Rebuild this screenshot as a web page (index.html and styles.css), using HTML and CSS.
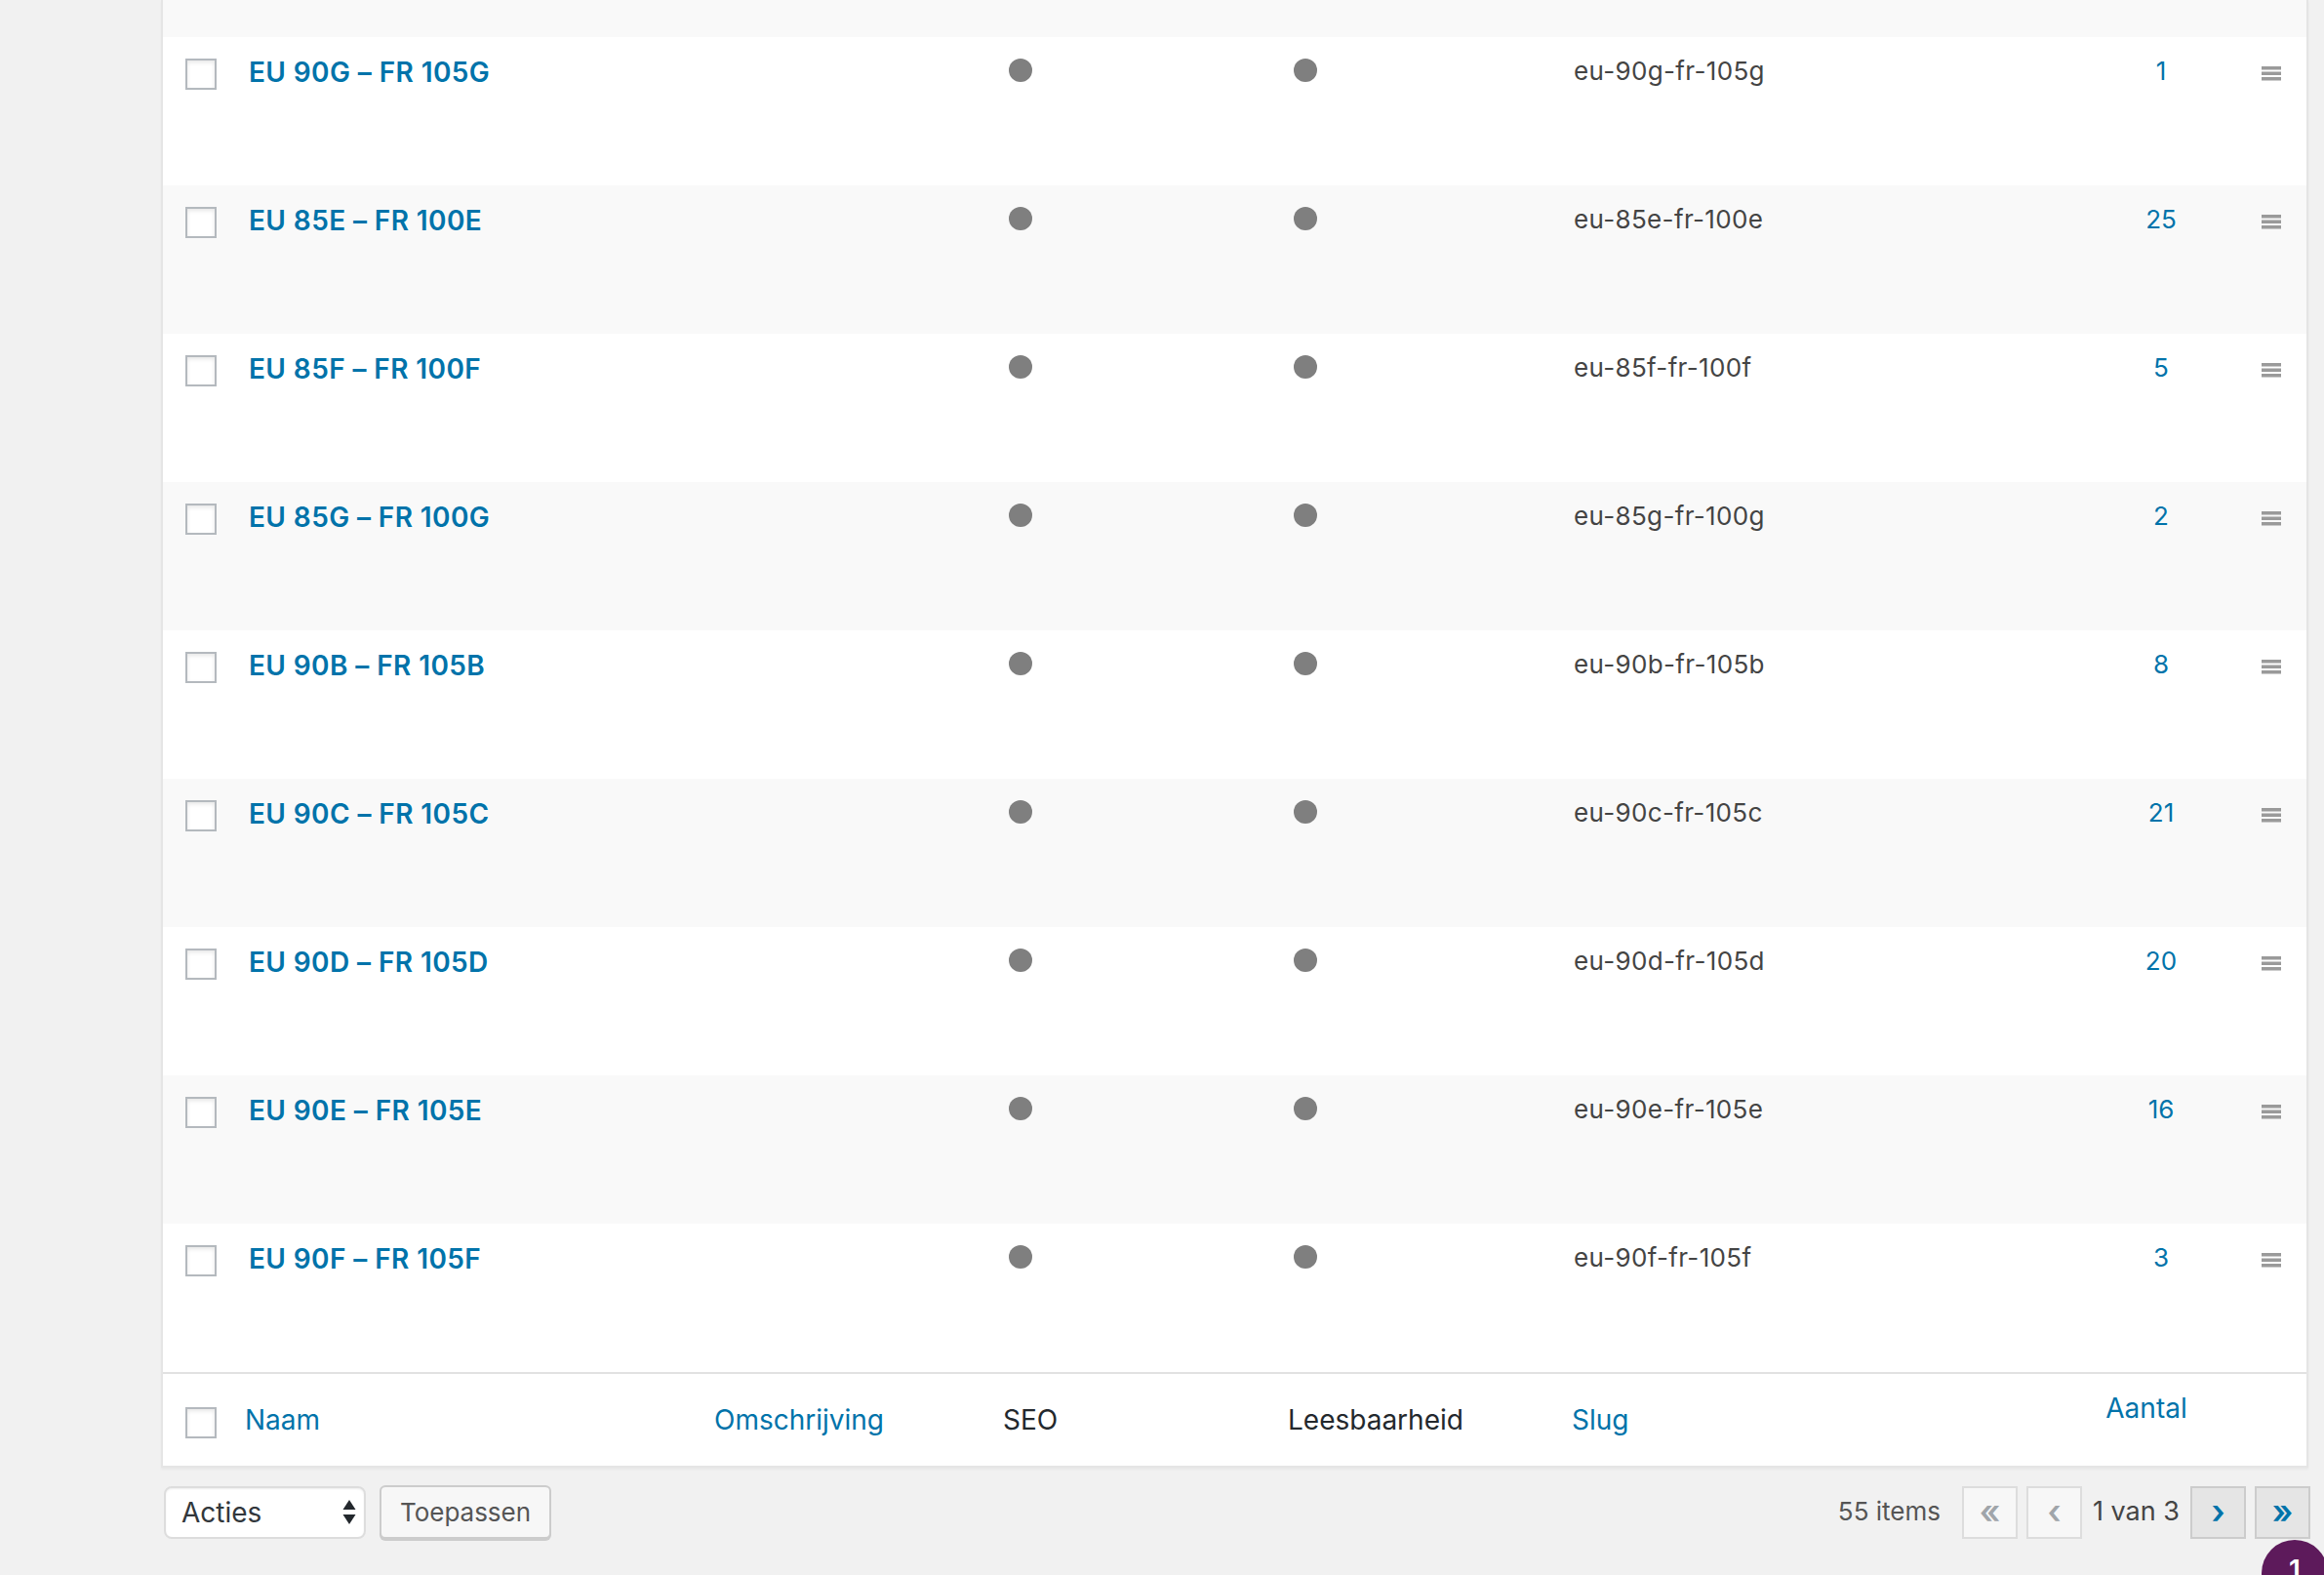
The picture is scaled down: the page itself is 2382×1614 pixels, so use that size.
FILE: index.html
```html
<!DOCTYPE html>
<html lang="nl">
<head>
<meta charset="utf-8">
<title>Maten</title>
<link rel="stylesheet" href="styles.css">
</head>
<body>
<div class="wrap">
  <div class="list">
    <div class="row partial"></div>

    <div class="row">
      <div class="c-cb"><span class="cb"></span></div>
      <div class="c-name"><a class="title" href="#">EU 90G – FR 105G</a></div>
      <div class="c-desc"></div>
      <div class="c-seo"><span class="dot"></span></div>
      <div class="c-read"><span class="dot"></span></div>
      <div class="c-slug">eu-90g-fr-105g</div>
      <div class="c-count"><a href="#">1</a></div>
      <div class="c-handle"><svg class="handle" width="20" height="15" viewBox="0 0 20 15"><rect x="0" y="0" width="20" height="3.5"/><rect x="0" y="5.5" width="20" height="3.5"/><rect x="0" y="11" width="20" height="3.5"/></svg></div>
    </div>

    <div class="row alt">
      <div class="c-cb"><span class="cb"></span></div>
      <div class="c-name"><a class="title" href="#">EU 85E – FR 100E</a></div>
      <div class="c-desc"></div>
      <div class="c-seo"><span class="dot"></span></div>
      <div class="c-read"><span class="dot"></span></div>
      <div class="c-slug">eu-85e-fr-100e</div>
      <div class="c-count"><a href="#">25</a></div>
      <div class="c-handle"><svg class="handle" width="20" height="15" viewBox="0 0 20 15"><rect x="0" y="0" width="20" height="3.5"/><rect x="0" y="5.5" width="20" height="3.5"/><rect x="0" y="11" width="20" height="3.5"/></svg></div>
    </div>

    <div class="row">
      <div class="c-cb"><span class="cb"></span></div>
      <div class="c-name"><a class="title" href="#">EU 85F – FR 100F</a></div>
      <div class="c-desc"></div>
      <div class="c-seo"><span class="dot"></span></div>
      <div class="c-read"><span class="dot"></span></div>
      <div class="c-slug">eu-85f-fr-100f</div>
      <div class="c-count"><a href="#">5</a></div>
      <div class="c-handle"><svg class="handle" width="20" height="15" viewBox="0 0 20 15"><rect x="0" y="0" width="20" height="3.5"/><rect x="0" y="5.5" width="20" height="3.5"/><rect x="0" y="11" width="20" height="3.5"/></svg></div>
    </div>

    <div class="row alt">
      <div class="c-cb"><span class="cb"></span></div>
      <div class="c-name"><a class="title" href="#">EU 85G – FR 100G</a></div>
      <div class="c-desc"></div>
      <div class="c-seo"><span class="dot"></span></div>
      <div class="c-read"><span class="dot"></span></div>
      <div class="c-slug">eu-85g-fr-100g</div>
      <div class="c-count"><a href="#">2</a></div>
      <div class="c-handle"><svg class="handle" width="20" height="15" viewBox="0 0 20 15"><rect x="0" y="0" width="20" height="3.5"/><rect x="0" y="5.5" width="20" height="3.5"/><rect x="0" y="11" width="20" height="3.5"/></svg></div>
    </div>

    <div class="row">
      <div class="c-cb"><span class="cb"></span></div>
      <div class="c-name"><a class="title" href="#">EU 90B – FR 105B</a></div>
      <div class="c-desc"></div>
      <div class="c-seo"><span class="dot"></span></div>
      <div class="c-read"><span class="dot"></span></div>
      <div class="c-slug">eu-90b-fr-105b</div>
      <div class="c-count"><a href="#">8</a></div>
      <div class="c-handle"><svg class="handle" width="20" height="15" viewBox="0 0 20 15"><rect x="0" y="0" width="20" height="3.5"/><rect x="0" y="5.5" width="20" height="3.5"/><rect x="0" y="11" width="20" height="3.5"/></svg></div>
    </div>

    <div class="row alt">
      <div class="c-cb"><span class="cb"></span></div>
      <div class="c-name"><a class="title" href="#">EU 90C – FR 105C</a></div>
      <div class="c-desc"></div>
      <div class="c-seo"><span class="dot"></span></div>
      <div class="c-read"><span class="dot"></span></div>
      <div class="c-slug">eu-90c-fr-105c</div>
      <div class="c-count"><a href="#">21</a></div>
      <div class="c-handle"><svg class="handle" width="20" height="15" viewBox="0 0 20 15"><rect x="0" y="0" width="20" height="3.5"/><rect x="0" y="5.5" width="20" height="3.5"/><rect x="0" y="11" width="20" height="3.5"/></svg></div>
    </div>

    <div class="row">
      <div class="c-cb"><span class="cb"></span></div>
      <div class="c-name"><a class="title" href="#">EU 90D – FR 105D</a></div>
      <div class="c-desc"></div>
      <div class="c-seo"><span class="dot"></span></div>
      <div class="c-read"><span class="dot"></span></div>
      <div class="c-slug">eu-90d-fr-105d</div>
      <div class="c-count"><a href="#">20</a></div>
      <div class="c-handle"><svg class="handle" width="20" height="15" viewBox="0 0 20 15"><rect x="0" y="0" width="20" height="3.5"/><rect x="0" y="5.5" width="20" height="3.5"/><rect x="0" y="11" width="20" height="3.5"/></svg></div>
    </div>

    <div class="row alt">
      <div class="c-cb"><span class="cb"></span></div>
      <div class="c-name"><a class="title" href="#">EU 90E – FR 105E</a></div>
      <div class="c-desc"></div>
      <div class="c-seo"><span class="dot"></span></div>
      <div class="c-read"><span class="dot"></span></div>
      <div class="c-slug">eu-90e-fr-105e</div>
      <div class="c-count"><a href="#">16</a></div>
      <div class="c-handle"><svg class="handle" width="20" height="15" viewBox="0 0 20 15"><rect x="0" y="0" width="20" height="3.5"/><rect x="0" y="5.5" width="20" height="3.5"/><rect x="0" y="11" width="20" height="3.5"/></svg></div>
    </div>

    <div class="row">
      <div class="c-cb"><span class="cb"></span></div>
      <div class="c-name"><a class="title" href="#">EU 90F – FR 105F</a></div>
      <div class="c-desc"></div>
      <div class="c-seo"><span class="dot"></span></div>
      <div class="c-read"><span class="dot"></span></div>
      <div class="c-slug">eu-90f-fr-105f</div>
      <div class="c-count"><a href="#">3</a></div>
      <div class="c-handle"><svg class="handle" width="20" height="15" viewBox="0 0 20 15"><rect x="0" y="0" width="20" height="3.5"/><rect x="0" y="5.5" width="20" height="3.5"/><rect x="0" y="11" width="20" height="3.5"/></svg></div>
    </div>

    <div class="foot">
      <div class="f-cb"><span class="cb"></span></div>
      <div class="f-name"><a href="#">Naam</a></div>
      <div class="f-desc"><a href="#">Omschrijving</a></div>
      <div class="f-seo">SEO</div>
      <div class="f-read">Leesbaarheid</div>
      <div class="f-slug"><a href="#">Slug</a></div>
      <div class="f-count"><a href="#">Aantal</a></div>
      <div class="f-handle"></div>
    </div>
  </div>

  <div class="tablenav">
    <div class="bulk">
      <div class="select">
        <span class="select-label">Acties</span>
        <svg class="arrows" width="14" height="26" viewBox="0 0 14 26"><polygon points="7,0 13.5,10 0.5,10"/><polygon points="0.5,15 13.5,15 7,25"/></svg>
      </div>
      <button class="apply" type="button">Toepassen</button>
    </div>
    <div class="pages">
      <span class="num">55 items</span>
      <span class="pbtn off">«</span>
      <span class="pbtn off">‹</span>
      <span class="ptext">1 van 3</span>
      <a class="pbtn on" href="#">›</a>
      <a class="pbtn on" href="#">»</a>
    </div>
  </div>
</div>
<div class="badge">1</div>
</body>
</html>
```

FILE: styles.css
```css
html, body {
  margin: 0;
  padding: 0;
  height: 1614px;
  overflow: hidden;
}
body {
  background: #f1f1f1;
  font-family: Inter, "Liberation Sans", Arial, sans-serif;
  color: #444;
  position: relative;
}
a {
  color: #0073aa;
  text-decoration: none;
}
.wrap {
  margin: 0 16px 0 165px;
}
.list {
  background: #fff;
  border: 2px solid #e5e5e5;
  border-top: 0;
  box-shadow: 0 2px 2px rgba(0, 0, 0, 0.04);
}
.row, .foot {
  display: grid;
  grid-template-columns: 68px 477px 296px 292px 291px 539px 170px 64px;
  box-sizing: border-box;
}
.row {
  height: 152px;
  padding-top: 16px;
  background: #fff;
}
.row.alt, .row.partial {
  background: #f9f9f9;
}
.row.partial {
  height: 38px;
  padding: 0;
}
.cb {
  display: block;
  width: 32px;
  height: 32px;
  box-sizing: border-box;
  border: 2px solid #b4b9be;
  background: #fff;
  box-shadow: inset 0 2px 4px rgba(0, 0, 0, 0.1);
  margin-top: 6px;
}
.c-cb { padding-left: 23px; }
.c-name { padding-left: 20px; }
.title {
  font-size: 28px;
  line-height: 40px;
  font-weight: 600;
  letter-spacing: 0.4px;
}
.c-seo, .c-read { padding-left: 26px; }
.dot {
  display: block;
  width: 24px;
  height: 24px;
  border-radius: 50%;
  background: #7f7f7f;
  margin-top: 6px;
}
.c-slug {
  padding-left: 22px;
  font-size: 26px;
  line-height: 38px;
  color: #444;
  letter-spacing: 0.35px;
}
.c-count {
  text-align: center;
  font-size: 26px;
  line-height: 38px;
}
.c-handle { padding-left: 18px; }
.handle {
  display: block;
  margin-top: 14px;
  fill: #9a9a9a;
}
.foot {
  border-top: 2px solid #e1e1e1;
  height: 96px;
  padding-top: 28px;
  font-size: 28px;
  line-height: 39px;
  color: #23282d;
  letter-spacing: 0;
}
.f-cb { padding-left: 23px; }
.f-name { padding-left: 16px; }
.f-desc, .f-seo, .f-read, .f-slug { padding-left: 20px; }
.f-count {
  text-align: center;
  padding-right: 30px;
  margin-top: -12px;
}
.tablenav {
  margin: 18px -2px 0 3px;
  display: flex;
  justify-content: space-between;
  align-items: center;
  height: 56px;
}
.bulk {
  display: flex;
  align-items: flex-start;
}
.select {
  display: flex;
  align-items: center;
  box-sizing: border-box;
  width: 207px;
  height: 54px;
  border: 2px solid #ddd;
  border-radius: 8px;
  background: #fff;
  box-shadow: inset 0 1px 2px rgba(0, 0, 0, 0.07);
  padding: 0 8px 0 16px;
  font-size: 28px;
  color: #32373c;
}
.select-label { flex: 1; }
.arrows {
  display: block;
  fill: #23282d;
}
.apply {
  margin: -1px 0 0 14px;
  box-sizing: border-box;
  width: 176px;
  height: 55px;
  border: 2px solid #ccc;
  border-radius: 6px;
  background: #f7f7f7;
  box-shadow: 0 2px 0 #ccc;
  font-family: inherit;
  font-size: 26px;
  color: #555;
  padding: 0;
}
.pages {
  display: flex;
  align-items: center;
  font-size: 26px;
  color: #555;
}
.num {
  margin-right: 22px;
  padding-bottom: 4px;
}
.pbtn {
  display: flex;
  align-items: center;
  justify-content: center;
  box-sizing: border-box;
  width: 57px;
  height: 54px;
  border: 2px solid #ddd;
  background: #f7f7f7;
  color: #a0a5aa;
  font-size: 34px;
  font-weight: 600;
  padding-bottom: 4px;
}
.pbtn + .pbtn {
  margin-left: 9px;
}
.pbtn.on {
  border-color: #ccc;
  background: #e5e5e5;
  color: #0073aa;
}
.ptext {
  margin: 0 11px;
  color: #444;
  font-size: 27px;
  padding-bottom: 4px;
}
.badge {
  position: absolute;
  left: 2318px;
  top: 1578px;
  width: 68px;
  height: 68px;
  border-radius: 50%;
  background: #5d1a5b;
  color: #fff;
  font-size: 28px;
  font-weight: 600;
  line-height: 62px;
  text-align: center;
}
```
